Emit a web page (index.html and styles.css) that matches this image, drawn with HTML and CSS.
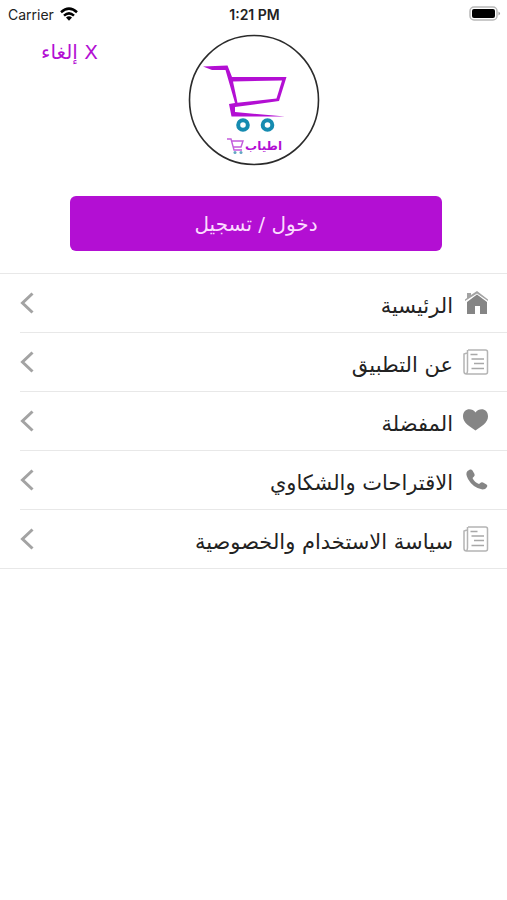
FILE: index.html
```html
<!DOCTYPE html>
<html lang="ar">
<head>
<meta charset="utf-8">
<meta name="viewport" content="width=device-width, initial-scale=1">
<title>القائمة</title>
<link rel="stylesheet" href="styles.css">
</head>
<body>
<svg class="defs" aria-hidden="true">
  <symbol id="chevron" viewBox="0 0 14 22"><path d="M12.500 1.500 2.500 11l10 9.500" fill="none" stroke="#a3a3a3" stroke-width="3"/></symbol>
  <symbol id="paper" viewBox="0 0 26 26">
    <path d="M5 1h17.500q2 0 2 2v20q0 2-2 2H3.500Q1 25 1 22.500V5l3-1M4.500 1v21q0 2.500-1.500 3" fill="none" stroke="#b4b4b4" stroke-width="1.500"/>
    <path d="M7.500 5.500h7M8.500 10H21M11 14.500h10M8.500 19.500H21" fill="none" stroke="#a8a8a8" stroke-width="1.500"/>
  </symbol>
</svg>
<div class="status" dir="ltr">
  <div class="carrier">Carrier
    <svg width="18" height="14" viewBox="0 0 18 14" aria-hidden="true"><g fill="none" stroke="#000" stroke-width="2.500"><path d="M1 5.200Q9-2 17 5.200"/><path d="M4 8.600Q9 4.200 14 8.600"/></g><path d="M6 10.600Q9 8 12 10.600L9 13.800z"/></svg>
  </div>
  <div class="time">1:21 PM</div>
  <svg class="battery" width="32" height="16" viewBox="0 0 32 16" aria-hidden="true"><rect x="1" y="1" width="27" height="13" rx="4" fill="#fff" stroke="#b8b8b8" stroke-width="1.500"/><rect x="3" y="3" width="23" height="9" rx="2"/><path d="M29.500 5.500q3 2 0 4z" fill="#999"/></svg>
</div>
<header class="top" dir="ltr">
  <button class="cancel" type="button" dir="ltr">إلغاء X</button>
  <svg class="logo" width="132" height="132" viewBox="0 0 132 132" role="img" aria-label="الشعار">
    <circle cx="66" cy="66" r="64.500" fill="#fff" stroke="#2b2b2b" stroke-width="1.600"/>
    <path d="M15 32.500 39.500 31.500 44 43h54.500L91 67l-44 6v5l50 4.500H43.500L41 70l6-1L37.500 36H24z" fill="#b30fd3"/>
    <path d="M45 47.500 94 46.500 88.500 64.500 49.500 68.800z" fill="#fff"/>
    <g fill="#fff" stroke="#168bb0" stroke-width="4"><circle cx="55" cy="91" r="4.800"/><circle cx="79.500" cy="91" r="4.800"/></g>
    <text x="94" y="116" class="wordmark" direction="rtl">اطياب</text>
    <g fill="none" stroke="#c35bdc" stroke-width="1.400"><path d="M39 105h4l3 11h8M44 107h11l-2 6h-8"/></g>
    <g fill="#63a6c4"><circle cx="47" cy="118.500" r="1.500"/><circle cx="53" cy="118.500" r="1.500"/></g>
  </svg>
</header>
<div class="action"><button class="login" type="button" dir="rtl">دخول / تسجيل</button></div>
<nav dir="rtl">
  <ul class="menu">
    <li><a href="#home"><svg class="icon" viewBox="0 0 26 26" aria-hidden="true"><path d="M4 12 14 4.500 24 12v12h-7v-8h-5v8H4z" fill="#858585"/><path d="M2 11V9.500L4 8V3h4v2l6-4 11 8.500V11L14 3.500z" fill="#a3a3a3"/></svg><span>الرئيسية</span><svg class="go" aria-hidden="true"><use href="#chevron"/></svg></a></li>
    <li><a href="#about"><svg class="icon" aria-hidden="true"><use href="#paper"/></svg><span>عن التطبيق</span><svg class="go" aria-hidden="true"><use href="#chevron"/></svg></a></li>
    <li><a href="#favorites"><svg class="icon" viewBox="0 0 26 26" aria-hidden="true"><path d="M12.500 4.500C9-.500 0 0 0 8.500 0 15 7 18.500 12.500 22.500 18 18.500 25 15 25 8.500 25 0 16-.500 12.500 4.500z" fill="#858585"/></svg><span>المفضلة</span><svg class="go" aria-hidden="true"><use href="#chevron"/></svg></a></li>
    <li><a href="#contact"><svg class="icon" viewBox="0 0 26 26" aria-hidden="true"><path d="M4.500 4 7 2.500q1.500-.500 2.500 1L11.500 7q.500 1.500-.500 2.500L9.500 11q2 4.500 6.500 6l2-1.500q1-.500 2 0l3.500 2q1.500 1 .500 2.500Q22.500 22.500 19.500 22.500 10 21 5 12 2 6.500 4.500 4z" fill="#858585"/></svg><span>الاقتراحات والشكاوي</span><svg class="go" aria-hidden="true"><use href="#chevron"/></svg></a></li>
    <li><a href="#privacy"><svg class="icon" aria-hidden="true"><use href="#paper"/></svg><span>سياسة الاستخدام والخصوصية</span><svg class="go" aria-hidden="true"><use href="#chevron"/></svg></a></li>
  </ul>
</nav>
</body>
</html>
```
FILE: styles.css
```css
* { box-sizing: border-box; }
body {
  margin: 0;
  background: #fff;
  color: #222;
  font-family: "DejaVu Sans", sans-serif;
}
.defs { position: absolute; width: 0; height: 0; }
.status {
  display: grid;
  grid-template-columns: 1fr auto 1fr;
  align-items: center;
  height: 28px;
  padding: 0 6px 0 8px;
  font-family: Inter, sans-serif;
  font-size: 14px;
}
.carrier { display: flex; align-items: center; gap: 6px; }
.time { font-weight: 600; }
.battery { justify-self: end; }
.top {
  display: grid;
  grid-template-columns: 1fr auto 1fr;
  align-items: start;
  padding-top: 6px;
}
button { border: 0; font-family: inherit; cursor: pointer; }
.cancel {
  justify-self: start;
  margin: 6px 0 0 41px;
  padding: 0;
  background: none;
  color: #b30fd3;
  font-size: 20px;
  line-height: 24px;
}
.logo { display: block; }
.wordmark {
  fill: #b30fd3;
  font-family: "DejaVu Sans", sans-serif;
  font-size: 12px;
  font-weight: 700;
}
.action { padding: 30px 65px 22px 70px; }
.login {
  display: block;
  width: 100%;
  height: 55px;
  border-radius: 6px;
  background: #b30fd3;
  color: #fbdcff;
  font-size: 20px;
}
.menu {
  margin: 0;
  padding: 0;
  list-style: none;
  border-top: 1px solid #e8e8e8;
  border-bottom: 1px solid #e8e8e8;
}
.menu li + li { margin-left: 20px; border-top: 1px solid #e8e8e8; }
.menu li + li a { padding-left: 0; }
.menu a {
  display: flex;
  align-items: center;
  gap: 10px;
  height: 58px;
  padding: 0 18px 0 20px;
  color: #222;
  font-size: 21px;
  text-decoration: none;
}
.menu span { padding-top: 6px; }
.icon { width: 26px; height: 26px; }
.go { width: 14px; height: 22px; margin-right: auto; }
```
